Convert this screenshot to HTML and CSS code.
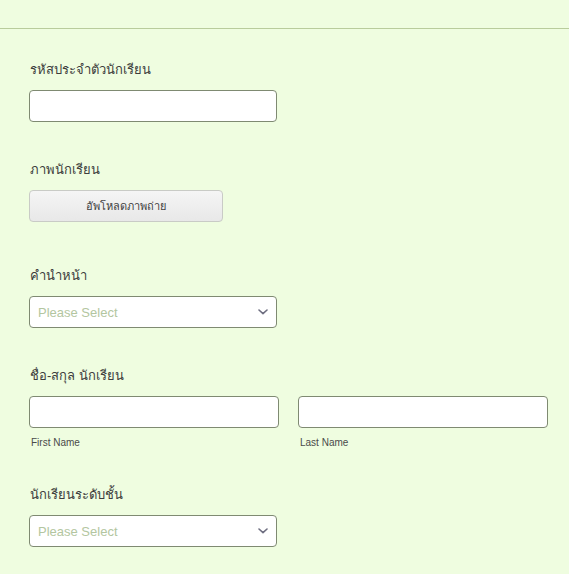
FILE: index.html
```html
<!DOCTYPE html>
<html lang="th">
<head>
<meta charset="utf-8">
<title>Form</title>
<link rel="stylesheet" href="styles.css">
</head>
<body>
<div class="page">
  <div class="top"></div>
  <form class="form">
    <div class="field f1">
      <label class="label">รหัสประจำตัวนักเรียน</label>
      <input class="input w248" type="text">
    </div>
    <div class="field f2">
      <label class="label">ภาพนักเรียน</label>
      <button class="upload" type="button">อัพโหลดภาพถ่าย</button>
    </div>
    <div class="field f3">
      <label class="label">คำนำหน้า</label>
      <div class="select w248">
        <span class="placeholder">Please Select</span>
        <svg class="chev" width="10" height="6" viewBox="0 0 10 6"><path d="M1 1 L5 4.6 L9 1" fill="none" stroke="#6e6e80" stroke-width="1.6" stroke-linecap="round" stroke-linejoin="round"/></svg>
      </div>
    </div>
    <div class="field f4">
      <label class="label">ชื่อ-สกุล นักเรียน</label>
      <div class="name-row">
        <div class="name-col">
          <input class="input" type="text">
          <span class="sublabel">First Name</span>
        </div>
        <div class="name-col">
          <input class="input" type="text">
          <span class="sublabel">Last Name</span>
        </div>
      </div>
    </div>
    <div class="field f5">
      <label class="label">นักเรียนระดับชั้น</label>
      <div class="select w248">
        <span class="placeholder">Please Select</span>
        <svg class="chev" width="10" height="6" viewBox="0 0 10 6"><path d="M1 1 L5 4.6 L9 1" fill="none" stroke="#6e6e80" stroke-width="1.6" stroke-linecap="round" stroke-linejoin="round"/></svg>
      </div>
    </div>
  </form>
</div>
</body>
</html>
```
FILE: styles.css
```css
html, body {
  margin: 0;
  padding: 0;
  background: #effde0;
}
.page {
  width: 569px;
  height: 574px;
  overflow: hidden;
  font-family: "Liberation Sans", "DejaVu Sans", sans-serif;
  color: #3b3b3b;
}
.top {
  height: 28px;
  border-bottom: 1px solid #b9cc9c;
}
.form {
  padding: 31px 0 0 29px;
  display: flex;
  flex-direction: column;
}
.field {
  display: flex;
  flex-direction: column;
  align-items: flex-start;
}
.label {
  font-size: 13px;
  line-height: 20px;
  height: 20px;
  margin: 0 0 10px 1px;
  color: #3d3d3d;
}
.f2 { margin-top: 38px; }
.f3 { margin-top: 44px; }
.f4 { margin-top: 38px; }
.f5 { margin-top: 36px; }
.input {
  box-sizing: border-box;
  height: 32px;
  width: 250px;
  margin: 0;
  border: 1px solid #7f8a72;
  border-radius: 4px;
  background: #fff;
  outline: none;
}
.w248 { width: 248px; }
.upload {
  box-sizing: border-box;
  width: 194px;
  height: 32px;
  margin: 0;
  border: 1px solid #c9cbc6;
  border-radius: 4px;
  background: linear-gradient(#f5f5f5, #e8e8e8);
  font-family: "Liberation Sans", "DejaVu Sans", sans-serif;
  font-size: 11px;
  color: #3f3f3f;
  padding: 0;
}
.select {
  box-sizing: border-box;
  height: 32px;
  border: 1px solid #7f8a72;
  border-radius: 4px;
  background: #fff;
  display: flex;
  align-items: center;
  justify-content: space-between;
  padding: 0 8px 0 8px;
}
.placeholder {
  font-size: 13px;
  color: #b3c6a0;
}
.chev { display: block; }
.name-row {
  display: flex;
  gap: 19px;
}
.name-col {
  display: flex;
  flex-direction: column;
}
.sublabel {
  font-size: 10px;
  line-height: 12px;
  margin: 9px 0 0 2px;
  color: #4a4a4a;
}
```
